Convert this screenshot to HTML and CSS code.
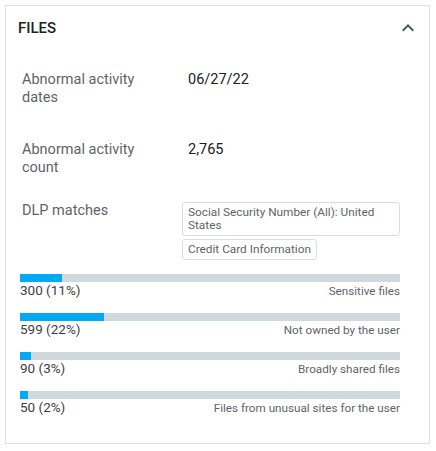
FILE: index.html
```html
<!DOCTYPE html>
<html>
<head>
<meta charset="utf-8">
<link rel="stylesheet" href="styles.css">
</head>
<body>
<div class="card">
  <div class="header">
    <div class="title">FILES</div>
    <svg class="chevron" width="24" height="24" viewBox="0 0 24 24"><path d="M12 8l-6 6 1.41 1.41L12 10.83l4.59 4.58L18 14z" fill="#455a64"/></svg>
  </div>
  <div class="rows">
    <div class="row row-1">
      <div class="label">Abnormal activity dates</div>
      <div class="value"><span class="text">06/27/22</span></div>
    </div>
    <div class="row row-2">
      <div class="label">Abnormal activity count</div>
      <div class="value"><span class="text">2,765</span></div>
    </div>
    <div class="row row-3">
      <div class="label">DLP matches</div>
      <div class="value chips">
        <span class="chip">Social Security Number (All): United States</span>
        <span class="chip">Credit Card Information</span>
      </div>
    </div>
  </div>
  <div class="bars">
    <div class="bar-item">
      <div class="track"><div class="fill" style="width: 11%"></div></div>
      <div class="bar-labels"><span class="num">300 (11%)</span><span class="name">Sensitive files</span></div>
    </div>
    <div class="bar-item">
      <div class="track"><div class="fill" style="width: 22%"></div></div>
      <div class="bar-labels"><span class="num">599 (22%)</span><span class="name">Not owned by the user</span></div>
    </div>
    <div class="bar-item">
      <div class="track"><div class="fill" style="width: 3%"></div></div>
      <div class="bar-labels"><span class="num">90 (3%)</span><span class="name">Broadly shared files</span></div>
    </div>
    <div class="bar-item">
      <div class="track"><div class="fill" style="width: 2%"></div></div>
      <div class="bar-labels"><span class="num">50 (2%)</span><span class="name">Files from unusual sites for the user</span></div>
    </div>
  </div>
</div>
</body>
</html>
```
FILE: styles.css
```css
* { box-sizing: border-box; }
html, body { margin: 0; padding: 0; background: #fff; }
body {
  padding: 5px;
  font-family: Roboto, "Liberation Sans", sans-serif;
}
.card {
  width: 425px;
  height: 439px;
  border: 1px solid #e0e0e0;
}
.header {
  display: flex;
  align-items: center;
  justify-content: space-between;
  padding: 10px 9px 0 12px;
}
.title {
  font-size: 15px;
  font-weight: 500;
  line-height: 20px;
  color: #202124;
}
.chevron { display: block; }
.rows {
  padding-left: 16px;
  padding-right: 29px;
}
.row {
  display: flex;
  align-items: flex-start;
}
.row-1 { margin-top: 31px; }
.row-2 { margin-top: 34px; }
.row-3 { margin-top: 25px; }
.label {
  width: 160px;
  padding-right: 30px;
  flex: none;
  font-size: 14.5px;
  line-height: 18px;
  color: #5f6368;
}
.value {
  flex: 1;
  min-width: 0;
}
.text {
  display: block;
  padding-left: 6px;
  font-size: 14.5px;
  line-height: 18px;
  color: #202124;
}
.chips {
  display: flex;
  flex-wrap: wrap;
  align-items: flex-start;
  row-gap: 3px;
}
.chip {
  display: inline-block;
  border: 1px solid #dadce0;
  border-radius: 3px;
  padding: 3px 5px;
  font-size: 11.8px;
  line-height: 13px;
  color: #5f6368;
}
.bars {
  margin-top: 14px;
  padding-left: 14px;
  padding-right: 29px;
  display: flex;
  flex-direction: column;
  gap: 15px;
}
.track {
  height: 8px;
  background: #cfd8dc;
}
.fill {
  height: 100%;
  background: #03a9f4;
}
.bar-labels {
  display: flex;
  justify-content: space-between;
  align-items: baseline;
  height: 16px;
  line-height: 16px;
  overflow: visible;
}
.num { font-size: 13.5px; color: #3c4043; }
.name { font-size: 11.7px; color: #5f6368; }
```
